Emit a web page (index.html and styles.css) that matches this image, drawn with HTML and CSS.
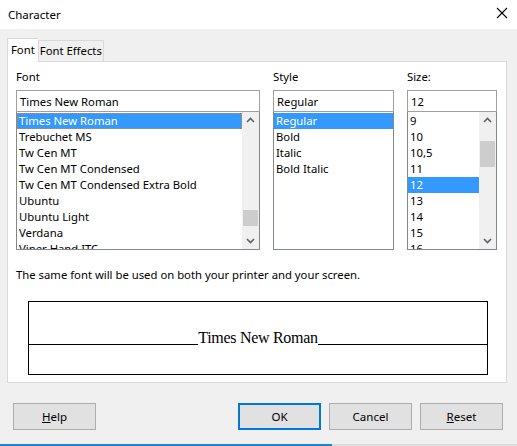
FILE: index.html
```html
<!DOCTYPE html>
<html>
<head>
<meta charset="utf-8">
<link rel="stylesheet" href="styles.css">
</head>
<body>
<div class="window">
  <div class="titlebar">
    <span class="title">Character</span>
    <svg class="close" width="12" height="12" viewBox="0 0 12 12"><path d="M1 1L11 11M11 1L1 11" stroke="#000" stroke-width="1.1" fill="none"/></svg>
  </div>
  <div class="tabs">
    <div class="tab active">Font</div>
    <div class="tab">Font Effects</div>
  </div>
  <div class="panel">
    <div class="columns">
      <div class="col col-font">
        <div class="label">Font</div>
        <div class="input">Times New Roman</div>
        <div class="list">
          <div class="items">
            <div class="item sel focus">Times New Roman</div>
            <div class="item">Trebuchet MS</div>
            <div class="item">Tw Cen MT</div>
            <div class="item">Tw Cen MT Condensed</div>
            <div class="item">Tw Cen MT Condensed Extra Bold</div>
            <div class="item">Ubuntu</div>
            <div class="item">Ubuntu Light</div>
            <div class="item">Verdana</div>
            <div class="item">Viner Hand ITC</div>
          </div>
          <div class="scrollbar">
            <svg class="arrow" width="17" height="17" viewBox="0 0 17 17"><path d="M5 10L8.5 6.5L12 10" stroke="#606060" stroke-width="1.6" fill="none"/></svg>
            <div class="track"><div class="thumb font-thumb"></div></div>
            <svg class="arrow" width="17" height="17" viewBox="0 0 17 17"><path d="M5 7L8.5 10.5L12 7" stroke="#606060" stroke-width="1.6" fill="none"/></svg>
          </div>
        </div>
      </div>
      <div class="col col-style">
        <div class="label">Style</div>
        <div class="input">Regular</div>
        <div class="list">
          <div class="items">
            <div class="item sel">Regular</div>
            <div class="item">Bold</div>
            <div class="item">Italic</div>
            <div class="item">Bold Italic</div>
          </div>
        </div>
      </div>
      <div class="col col-size">
        <div class="label">Size:</div>
        <div class="input">12</div>
        <div class="list">
          <div class="items">
            <div class="item">9</div>
            <div class="item">10</div>
            <div class="item">10,5</div>
            <div class="item">11</div>
            <div class="item sel">12</div>
            <div class="item">13</div>
            <div class="item">14</div>
            <div class="item">15</div>
            <div class="item">16</div>
          </div>
          <div class="scrollbar">
            <svg class="arrow" width="17" height="17" viewBox="0 0 17 17"><path d="M5 10L8.5 6.5L12 10" stroke="#606060" stroke-width="1.6" fill="none"/></svg>
            <div class="track"><div class="thumb size-thumb"></div></div>
            <svg class="arrow" width="17" height="17" viewBox="0 0 17 17"><path d="M5 7L8.5 10.5L12 7" stroke="#606060" stroke-width="1.6" fill="none"/></svg>
          </div>
        </div>
      </div>
    </div>
    <div class="note">The same font will be used on both your printer and your screen.</div>
    <div class="preview">
      <div class="preview-row">
        <span class="rule"></span>
        <span class="sample">Times New Roman</span>
        <span class="rule"></span>
      </div>
    </div>
  </div>
  <div class="buttons">
    <button class="btn"><u>H</u>elp</button>
    <span class="spacer"></span>
    <button class="btn default">OK</button>
    <button class="btn">Cancel</button>
    <button class="btn"><u>R</u>eset</button>
  </div>
  <div class="bottom-edge"><span class="blue"></span></div>
</div>
</body>
</html>
```
FILE: styles.css
```css
html, body {
  margin: 0;
  padding: 0;
}
body {
  font-family: "Noto Sans", "DejaVu Sans", sans-serif;
  font-size: 11.3px;
  color: #000;
  background: #f0f0f0;
}
.window {
  width: 517px;
  height: 446px;
  background: #f0f0f0;
  display: flex;
  flex-direction: column;
  overflow: hidden;
}
.titlebar {
  height: 29px;
  background: #fff;
  display: flex;
  align-items: center;
  justify-content: space-between;
  padding: 0 9px 0 8px;
  flex-shrink: 0;
}
.title {
  font-size: 11.5px;
  line-height: 16px;
  margin-top: 1px;
}
.close {
  margin-top: -3px;
}
.tabs {
  display: flex;
  align-items: flex-end;
  margin: 9px 0 0 7px;
  height: 23px;
  flex-shrink: 0;
}
.tab {
  height: 21px;
  line-height: 20px;
  padding: 0 1px 0 1px;
  border: 1px solid #d9d9d9;
  border-bottom: none;
  background: #f0f0f0;
  box-sizing: border-box;
  position: relative;
}
.tab.active {
  height: 24px;
  background: #fff;
  padding: 0 3px;
  line-height: 22px;
  margin-bottom: -1px;
  z-index: 1;
  border-right: none;
}
.tab + .tab {
  border-left: 1px solid #d9d9d9;
}
.panel {
  margin: 0 10px 0 7px;
  height: 322px;
  box-sizing: border-box;
  background: #fff;
  border: 1px solid #d9d9d9;
  padding: 7px 0 0 8px;
  flex-shrink: 0;
}
.columns {
  display: flex;
  gap: 13px;
}
.col-font { width: 244px; }
.col-style { width: 121px; }
.col-size { width: 90px; }
.label {
  line-height: 16px;
  height: 16px;
  margin-bottom: 5px;
}
.input {
  height: 22px;
  box-sizing: border-box;
  border: 1px solid #a0a0a0;
  line-height: 21px;
  padding-left: 3px;
}
.list {
  height: 138px;
  box-sizing: border-box;
  border: 1px solid #828790;
  border-top: none;
  display: flex;
  overflow: hidden;
  background: #fff;
}
.items {
  flex: 1;
  overflow: hidden;
  padding-top: 1px;
}
.item {
  height: 16px;
  line-height: 16px;
  padding-left: 2px;
  white-space: nowrap;
  box-sizing: border-box;
}
.item.sel {
  background: #3399ff;
  color: #fff;
}
.item.focus {
  outline: 1px dotted #d28a3a;
  outline-offset: -1px;
}
.scrollbar {
  width: 17px;
  background: #f0f0f0;
  display: flex;
  flex-direction: column;
  flex-shrink: 0;
}
.arrow {
  display: block;
  flex-shrink: 0;
}
.track {
  flex: 1;
  position: relative;
}
.thumb {
  background: #cdcdcd;
  margin: 0 1px;
}
.font-thumb {
  margin-top: 81px;
  height: 16px;
}
.size-thumb {
  margin-top: 12px;
  height: 26px;
}
.note {
  margin-top: 17px;
  line-height: 16px;
}
.preview {
  margin: 18px 0 0 12px;
  width: 460px;
  height: 74px;
  box-sizing: border-box;
  border: 1px solid #000;
}
.preview-row {
  display: flex;
  align-items: flex-end;
  height: 43px;
}
.rule {
  flex: 1;
  border-bottom: 1px solid #000;
}
.sample {
  font-family: "Liberation Serif", "Times New Roman", serif;
  font-size: 16px;
  line-height: 16px;
  height: 14px;
  overflow: visible;
  letter-spacing: -0.3px;
  padding-bottom: 1px;
}
.buttons {
  display: flex;
  gap: 8px;
  padding: 0 14px 0 13px;
  margin-top: 20px;
  flex-shrink: 0;
}
.spacer { flex: 1; }
.btn {
  width: 83px;
  height: 27px;
  box-sizing: border-box;
  background: #e1e1e1;
  border: 1px solid #adadad;
  font-family: "Noto Sans", "DejaVu Sans", sans-serif;
  font-size: 11.5px;
  color: #000;
  padding: 0;
  margin: 0;
}
.btn.default {
  border: 2px solid #0078d7;
}
.bottom-edge {
  margin-top: auto;
  height: 2px;
  background: #dcdcdc;
  display: flex;
}
.blue {
  width: 332px;
  background: #1883d7;
}
```
